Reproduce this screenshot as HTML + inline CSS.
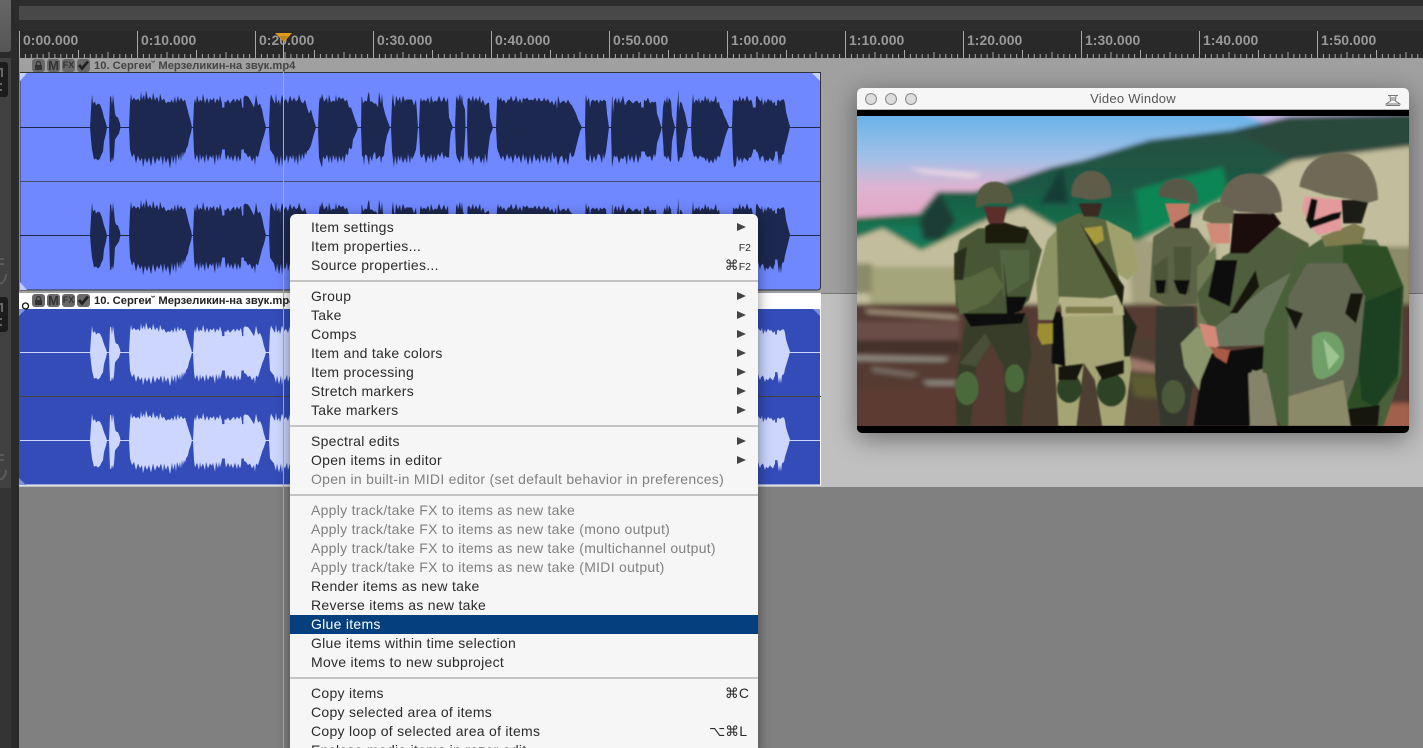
<!DOCTYPE html>
<html><head><meta charset="utf-8"><title>Reaper</title>
<style>
html,body{margin:0;padding:0;background:#808080}
#r{position:relative;width:1423px;height:748px;overflow:hidden;font-family:"Liberation Sans",sans-serif;background:#808080}
.a{position:absolute}
#menu{left:290px;top:214px;width:468px;height:540px;background:#f6f6f6;border-radius:6px 6px 0 0;box-shadow:0 3px 14px rgba(0,0,0,.45)}
.i{position:absolute;left:0;width:468px;height:19px;line-height:19px;font-size:14px;letter-spacing:.28px;color:#2b2b2b;padding-left:21px;box-sizing:border-box;white-space:nowrap}
.d{color:#808080}
.h{background:#053f7d;color:#fff}
.s{position:absolute;left:0;width:468px;height:2px;background:#c4c4c4}
.ar{position:absolute;left:447px;top:5px;width:0;height:0;border-left:9px solid #444;border-top:4.5px solid transparent;border-bottom:4.5px solid transparent}
.k{position:absolute;right:7px;top:0;letter-spacing:0;font-family:"Liberation Sans","DejaVu Sans",sans-serif}
.k small{font-size:10.5px}
.hd{position:absolute;height:13px;font:bold 11.2px/14px "Liberation Sans",sans-serif;white-space:nowrap}
.b{position:absolute;top:0;width:13px;height:13px;background:#696969;border-radius:3px;color:#333;text-align:center;font:bold 13px/13px "Liberation Sans",sans-serif}
#vw{left:857px;top:88px;width:552px;height:345px;background:#000;border-radius:5px;box-shadow:0 6px 26px rgba(0,0,0,.42);overflow:hidden}
#tb{position:absolute;left:0;top:0;width:552px;height:21px;background:#f6f6f6;border-bottom:1px solid #b5b5b5}
.c{position:absolute;top:5px;width:10px;height:10px;border-radius:50%;background:#dcdcdc;border:1px solid #8b8b8b}
</style></head><body><div id="r">

<div class="a" style="left:0;top:0;width:1423px;height:58px;background:#2d2d2d"></div>
<div class="a" style="left:19px;top:6px;width:1404px;height:14px;background:#484848"></div>
<div class="a" style="left:19px;top:31px;width:1404px;height:27px;background:#292929"></div>
<div class="a" style="left:19px;top:58px;width:1404px;height:235px;background:#a0a0a0"></div>
<div class="a" style="left:19px;top:293px;width:1404px;height:194px;background:#c0c0c0;border-top:1px solid #777;box-sizing:border-box"></div>
<div class="a" style="left:19px;top:487px;width:1404px;height:261px;background:#808080"></div>
<div class="a" style="left:0;top:0;width:19px;height:748px;background:#2b2b2b"></div>
<div class="a" style="left:0;top:0;width:11px;height:52px;background:linear-gradient(#666,#555);border-radius:0 0 3px 0"></div>
<div class="a" style="left:0;top:58px;width:11px;height:430px;background:#414141"></div>
<div class="a" style="left:0;top:488px;width:11px;height:260px;background:#343434"></div>
<div class="a" style="left:0;top:62px;width:8px;height:35px;background:#1c1c1c;border-radius:0 3px 3px 0"></div>
<div class="a" style="left:0;top:297px;width:8px;height:35px;background:#1c1c1c;border-radius:0 3px 3px 0"></div>
<svg class="a" style="left:0;top:58px" width="11" height="430" viewBox="0 58 11 430" fill="none" stroke="#5a5a5a" stroke-width="2">
<path d="M0 69H2V77" stroke="#666"/><path d="M0 84H2M0 90H2" stroke="#666"/><path d="M0 304H2V312" stroke="#666"/><path d="M0 319H2M0 325H2" stroke="#666"/>
<path d="M0 259H4M0 264H4M6 274C6 280 2 284 0 283"/><path d="M0 455H4M0 460H4M6 470C6 476 2 480 0 479"/>
</svg>

<svg class="a" style="left:0;top:0" width="1423" height="748" viewBox="0 0 1423 748">
<defs>
<pattern id="t" patternUnits="userSpaceOnUse" x="19" y="31" width="118" height="27">
<path stroke="#a8a8a8" stroke-width="1" fill="none" d="M.5 0V27M6.4 23V27M12.3 23V27M18.2 23V27M24.1 23V27M30 21V27M35.9 23V27M41.8 23V27M47.7 23V27M53.6 23V27M59.5 19V27M65.4 23V27M71.3 23V27M77.2 23V27M83.1 23V27M89 21V27M94.9 23V27M100.8 23V27M106.7 23V27M112.6 23V27"/>
</pattern>
<path id="w" d="M90,0 91,-18 92,-33 93,-24 95,-26 96,-22 98,-24 100,-23 102,-18 104,-10 106,-4 107,0 106,6 104,14 103,24 101,28 100,31 98,33 96,31 94,32 93,27 92,22 91,12Z
M109,0 110,-30 111,-32 112,-22 113,-33 114,-24 115,-14 116,-11 118,-10 120,-4 120.5,0 119,6 117,9 115,12 114,28 113,34 112,30 111,35 110,34Z
M129,0 130,-24 131,-34 132,-27 134,-30 136,-27 138,-29 140,-26 141,-36 142,-28 144,-33 145,-27 146,-37 148,-28 150,-31 152,-27 153,-35 155,-27 157,-31 159,-25 160,-34 162,-27 164,-29 166,-24 168,-26 170,-25 172,-28 173,-24 175,-31 176,-24 178,-32 179,-26 181,-30 183,-26 185,-28 187,-20 189,-12 191,-5 192,0 191,5 189,12 188,18 186,22 185,27 184,24 183,30 182,24 181,34 180,26 179,33 177,26 176,38 175,28 173,36 172,27 170,41 168,30 166,36 164,28 163,38 161,28 159,34 157,30 155,37 153,28 151,39 149,30 147,36 145,30 143,40 142,30 140,34 138,28 136,36 134,26 132,30 131,26 130,22Z
M193,0 194,-24 195,-29 196,-24 197,-32 199,-25 200,-28 202,-26 203,-34 205,-24 207,-30 209,-24 210,-29 212,-27 214,-30 215,-24 217,-29 219,-26 220,-32 222,-24 223,0 222,24 220,33 219,26 218,34 216,26 215,38 213,27 212,31 210,28 208,34 206,26 205,36 203,28 201,33 200,26 199,36 197,27 196,30 195,33 194,24Z
M224,0 224.5,-26 226,-25 228,-28 230,-24 232,-27 234,-29 235,-25 237,-29 239,-26 241,-30 242,-22 242.5,0 241,30 240,34 238,28 237,35 235,27 233,34 231,28 230,33 228,27 226,33 225,26Z
M243,0 243.5,-30 245,-32 248,-31 250,-28 252,-24 254,-20 255,-25 256,-33 258,-22 260,-24 262,-18 264,-8 266,0 264,8 262,14 260,22 258,30 256,28 255,38 254,30 252,34 250,28 248,30 246,26 244,25Z
M269,0 270,-26 271,-33 273,-28 275,-24 276,-34 277,-24 279,-28 280,-22 282,-33 284,-26 286,-29 288,-24 290,-32 292,-26 294,-30 296,-26 298,-28 299,-33 301,-26 303,-24 305,-28 307,-20 309,-14 311,-18 313,-10 315,-4 316,0 315,3 313,10 311,18 309,22 307,24 306,28 305,24 304,32 302,26 301,34 299,26 298,38 296,28 295,36 293,27 292,32 290,28 288,36 287,27 285,34 283,30 282,40 281,28 279,39 277,28 276,37 274,28 272,25 270,22Z
M318,0 319,-24 320,-31 321,-28 322,-34 324,-26 325,-27 327,-30 328,-24 329,-33 331,-25 333,-27 335,-26 336,-33 337,-26 339,-31 341,-28 343,-30 345,-26 347,-28 349,-20 351,-20 353,-14 355,-8 357,-3 358,0 357,3 355,8 353,12 352,20 351,22 349,20 348,28 346,26 344,36 343,28 341,34 339,28 338,36 336,28 335,33 333,27 332,36 330,28 329,36 327,27 325,32 323,29 322,40 320,34 319,30Z
M361,0 361.5,-30 362,-31 363,-24 365,-27 367,-26 368,-33 369,-36 370,-26 372,-26 374,-24 376,-24 378,-20 379,-36 381,-24 382,-34 383,-22 385,-14 387,-8 389,-3 390,0 389,3 387,8 385,18 384,28 382,30 381,36 380,28 378,30 376,32 375,24 373,28 372,34 370,28 369,38 367,28 365,27 364,38 363,28 362,30Z
M391,0 392,-26 393,-34 394,-24 395,-20 396,-32 398,-26 400,-31 401,-24 403,-32 405,-26 406,-28 408,-28 410,-28 412,-28 414,-22 416,-28 417,-14 418,0 417,12 416,22 414,28 412,32 411,28 410,36 408,26 407,36 405,30 403,36 401,28 400,34 398,28 397,38 395,28 394,40 393,32 392,24Z
M419,0 420,-26 421,-30 422,-26 424,-28 426,-26 428,-30 430,-24 431,-32 433,-25 435,-27 437,-26 439,-32 441,-26 442,-26 444,-31 446,-25 448,-30 449,-10 451,-5 453,0 451,4 450,12 449,30 447,30 445,28 444,32 442,24 440,30 438,26 436,34 434,28 433,36 431,26 430,32 428,28 426,36 424,26 422,30 421,30 420,26Z
M455,0 456,-28 457,-32 458,-26 460,-34 461,-26 462,-33 463,-24 465,-18 465.5,0 465,10 464,28 463,34 461,28 460,36 458,32 457,30 456,26Z
M467,0 467.5,-28 469,-30 471,-26 473,-32 474,-26 476,-30 478,-26 480,-32 481,-24 483,-28 485,-22 487,-24 489,-25 490,-10 492,-3 493,0 492,3 490,8 488,24 487,36 485,26 484,38 483,30 481,36 479,28 477,32 475,28 473,38 472,30 470,34 469,28 468,32Z
M496,0 497,-26 498,-32 499,-27 501,-30 502,-26 504,-28 506,-24 508,-28 510,-28 511,-32 513,-26 515,-28 516,-32 518,-25 520,-29 522,-24 523,-30 525,-28 527,-30 529,-27 531,-28 533,-27 535,-30 537,-26 539,-30 541,-26 543,-27 544,-30 546,-26 548,-29 550,-24 552,-27 554,-22 556,-28 557,-18 558,-32 560,-24 562,-26 564,-27 566,-24 568,-28 570,-24 572,-22 574,-18 576,-14 578,-8 580,-4 582,0 580,4 578,12 576,20 574,28 572,30 570,24 568,38 566,30 564,36 562,28 560,30 558,38 556,28 554,32 552,24 551,36 549,28 547,36 545,28 543,34 541,26 540,36 538,30 536,34 534,26 532,37 530,28 528,38 526,28 525,34 523,26 521,36 519,28 517,32 515,26 513,36 511,28 509,32 507,26 505,34 503,28 501,32 499,26 498,24 497,20Z
M585,0 585.5,-28 586,-33 587,-26 589,-30 590,-20 591,-26 593,-28 595,-26 597,-28 599,-24 600,-28 602,-26 604,-28 606,-26 607,-14 609,0 608,8 607,16 606,24 604,32 603,26 602,36 600,28 598,26 596,34 594,28 592,36 590,26 589,34 587,32 586,32Z
M611,0 612,-30 612.5,-31 613,-14 614,-26 616,-30 617,-24 619,-30 620,-24 622,-28 623,-32 625,-22 627,-26 629,-28 631,-26 633,-24 635,-26 637,-27 639,-24 641,-26 642,0 641,32 640,28 638,36 636,26 634,36 632,28 630,34 628,26 627,38 625,28 623,32 621,30 619,36 617,28 616,30 614,28 612,40Z
M643,0 644,-28 646,-26 648,-30 650,-24 652,-26 654,-25 656,-26 657,-14 659,-8 661,-1 661.5,0 661,3 659,10 657,16 656,26 655,30 654,26 652,34 650,28 648,30 646,28 645,26Z
M662,0 663,-20 664,-26 665,-28 666,-24 667,-32 668,-24 669,-30 671,-26 672,-12 674,-4 675,0 674,4 672,14 671,34 670,34 668,28 667,32 665,28 664,30 663,12Z
M676,0 677,-20 678,-30 678.5,-38 679,-16 680,-26 682,-24 683,-20 685,-14 687,-4 688,0 687,4 685,14 684,22 683,26 682,30 680,30 679,34 678,34 677,22Z
M691,0 692,-22 693,-34 694,-24 695,-26 696,-28 698,-26 699,-30 700,-24 702,-28 704,-26 705,-32 707,-26 708,-30 710,-24 711,-28 712,-26 714,-26 716,-32 717,-24 719,-26 720,-20 722,-18 724,-12 726,-8 729,-1 727,4 725,10 723,18 721,24 720,30 718,28 716,34 715,30 713,36 711,32 709,36 707,30 706,34 704,30 702,30 700,28 698,32 696,28 694,30 692,22Z
M732,0 733,-28 735,-26 736,-28 738,-26 740,-32 741,-26 743,-30 745,-26 747,-32 749,-26 751,-28 752,-26 753,-20 754,0 753,24 751,30 749,30 748,34 746,32 744,30 742,36 741,30 739,34 737,28 736,38 734,40 733,30Z
M755,0 756,-30 757,-32 759,-28 761,-26 762,-30 763,-22 765,-28 766,-24 768,-29 770,-26 771,-28 773,-24 775,-26 776,0 775,28 773,34 771,32 770,30 768,34 766,32 765,36 763,28 761,30 760,34 758,26 757,24 756,24Z
M776,0 777,-26 778,-28 780,-26 782,-28 784,-28 785,-24 786,-16 788,-8 790,-1 789,4 787,12 785,20 784,26 782,28 781,38 780,30 779,38 778,30 777,20Z
M221,-20 226,-20 226,22 221,22Z M240,-20 245,-20 245,22 240,22Z M640,-20 645,-20 645,24 640,24Z M752,-20 757,-20 757,22 752,22Z M773,-22 778,-22 778,24 773,24Z"/>
</defs>
<rect x="19" y="31" width="1404" height="27" fill="url(#t)"/>
<g font-family="Liberation Sans" font-size="14" font-weight="bold" fill="#999">
<text x="23" y="45">0:00.000</text><text x="141" y="45">0:10.000</text><text x="259" y="45">0:20.000</text><text x="377" y="45">0:30.000</text><text x="495" y="45">0:40.000</text><text x="613" y="45">0:50.000</text><text x="731" y="45">1:00.000</text><text x="849" y="45">1:10.000</text><text x="967" y="45">1:20.000</text><text x="1085" y="45">1:30.000</text><text x="1203" y="45">1:40.000</text><text x="1321" y="45">1:50.000</text>
</g>

<!-- item 1 -->
<path d="M20 72.5H820.5V287a3 3 0 0 1-3 3H20Z" fill="#7088ff" stroke="#333" stroke-width="1"/>
<rect x="19" y="72" width="1" height="218" fill="#7088ff"/>
<path d="M20 81V73H27Z" fill="#c8d2ff"/><path d="M20 282V290H27Z" fill="#c0ccff"/><path d="M812 73H820V81Z" fill="#c8d2ff"/>
<rect x="20" y="181" width="800" height="1" fill="#454a66"/>
<rect x="20" y="127" width="800" height="1" fill="#1d2850"/><rect x="20" y="235" width="800" height="1" fill="#1d2850"/>
<use href="#w" transform="translate(0,127.5)" fill="#1d2850"/>
<use href="#w" transform="translate(0,235.5)" fill="#1d2850"/>

<!-- item 2 -->
<rect x="19" y="293" width="802" height="16" fill="#fff"/>
<path d="M19 309H820.5V484.5H19Z" fill="#334cb8"/>
<path d="M820.5 294V485H19" fill="none" stroke="#fff" stroke-width="1"/>
<path d="M19 316V309H26Z" fill="#7e93dd"/><path d="M19 478V485H26Z" fill="#7e93dd"/><path d="M813 309H820V316Z" fill="#7e93dd"/>
<rect x="19" y="396" width="802" height="1" fill="#444"/>
<rect x="20" y="352" width="800" height="1" fill="#ccd6ff"/><rect x="20" y="440" width="800" height="1" fill="#ccd6ff"/>
<use href="#w" transform="translate(0,352.5) scale(1,.82)" fill="#ccd6ff"/>
<use href="#w" transform="translate(0,440.5) scale(1,.82)" fill="#ccd6ff"/>
<circle cx="25.5" cy="306" r="3" fill="#fff" stroke="#111" stroke-width="1.3"/>

<!-- playhead -->
<rect x="283" y="33" width="1" height="715" fill="#e6a640"/>
<path d="M275 33H292L284 42Z" fill="#e39a1c"/><path d="M279 36H288L283.5 41Z" fill="#b98320"/>
</svg>

<div class="hd" style="left:32px;top:59px;color:#444;width:270px"><span class="b" style="left:0"><svg width="13" height="13" viewBox="0 0 13 13"><path d="M3 6h7v5H3Z" fill="#333"/><path d="M4.5 6V4.5a2 2 0 0 1 4 0V6" fill="none" stroke="#333" stroke-width="1.3"/></svg></span><span class="b" style="left:15px">M</span><span class="b" style="left:30px;font-size:9px">FX</span><span class="b" style="left:45px"><svg width="13" height="13" viewBox="0 0 13 13"><path d="M2 6l3 3.5 6-7" fill="none" stroke="#222" stroke-width="2.8"/></svg></span><span style="position:absolute;left:62px;top:0">10. Сергеи˘ Мерзеликин-на звук.mp4</span></div>
<div class="hd" style="left:32px;top:294px;color:#222;width:258px;overflow:hidden;height:14px"><span class="b" style="left:0"><svg width="13" height="13" viewBox="0 0 13 13"><path d="M3 6h7v5H3Z" fill="#333"/><path d="M4.5 6V4.5a2 2 0 0 1 4 0V6" fill="none" stroke="#333" stroke-width="1.3"/></svg></span><span class="b" style="left:15px">M</span><span class="b" style="left:30px;font-size:9px">FX</span><span class="b" style="left:45px"><svg width="13" height="13" viewBox="0 0 13 13"><path d="M2 6l3 3.5 6-7" fill="none" stroke="#222" stroke-width="2.8"/></svg></span><span style="position:absolute;left:62px;top:0">10. Сергеи˘ Мерзеликин-на звук.mp4</span></div>

<!-- video window -->
<div class="a" id="vw">
<svg style="position:absolute;left:0;top:28px" width="552" height="310" viewBox="19 108 1511 930" preserveAspectRatio="none">
<defs>
<linearGradient id="sky" x1="0" y1="0" x2="0" y2="1"><stop offset="0" stop-color="#62b2ea"/><stop offset=".4" stop-color="#a4c0e6"/><stop offset=".62" stop-color="#dcb4d2"/><stop offset="1" stop-color="#e8a0c0"/></linearGradient>
<linearGradient id="fo" x1="0" y1="0" x2="0" y2="1"><stop offset="0" stop-color="#2a4c40"/><stop offset=".5" stop-color="#1c5844"/><stop offset="1" stop-color="#0c8052"/></linearGradient>
<filter id="b1" x="-10%" y="-10%" width="120%" height="120%"><feGaussianBlur stdDeviation="7"/></filter>
<filter id="b2" x="-10%" y="-10%" width="120%" height="120%"><feGaussianBlur stdDeviation="2"/></filter>
<clipPath id="vc"><rect x="19" y="108" width="1511" height="930"/></clipPath>
</defs>
<g clip-path="url(#vc)">
<g filter="url(#b1)">
<rect x="0" y="90" width="1540" height="370" fill="url(#sky)"/>
<path d="M1050 90H1540V170L1200 160Z" fill="#c4b8e6"/>
<path d="M160 262L360 280 340 296 200 280Z" fill="#e6d4e4"/>
<path d="M0 415L190 400 240 335 340 335 450 300 550 262 640 240 820 180 1050 150 1200 110 1540 100V300L1200 280 800 520 200 530 0 470Z" fill="url(#fo)"/>
<path d="M0 430L100 440 200 440 300 400 200 500Z" fill="#12785a"/>
<path d="M190 420L245 340 290 420 250 480 200 480Z" fill="#1c3c34"/>
<path d="M520 370L580 260 600 370Z" fill="#173c34"/>
<path d="M1050 150L1200 115 1540 105V210L1210 240Z" fill="#2c4a3e"/>
<path d="M780 330L1020 260 1040 370 800 470Z" fill="#0e8656"/>
<path d="M0 480L90 445 195 512 350 430 470 380 570 445 650 460 790 482 1000 370 1210 242 1540 198V700H0Z" fill="#c2bd9c"/>
<path d="M40 560H310V695H60Z" fill="#a5a57b"/>
<path d="M0 550H60V640H0Z" fill="#8a8b69"/>
<path d="M760 480H1000V820H780Z" fill="#a39f7c"/>
<path d="M1440 500H1540V740H1480Z" fill="#8c8a68"/>
<rect x="0" y="672" width="1540" height="390" fill="#543a32"/>
<path d="M40 688L290 705 300 718 50 700Z" fill="#a8947f"/>
<rect x="0" y="725" width="300" height="55" fill="#6b4e46"/>
<rect x="0" y="780" width="300" height="40" fill="#45302b"/>
<path d="M0 825L270 832 260 845 0 842Z" fill="#8f8a80"/>
<path d="M60 860L190 880 170 892 60 876Z" fill="#776c62"/>
<path d="M200 902H290V916H210Z" fill="#8f8a80"/>
<rect x="0" y="925" width="300" height="130" fill="#5c3a32"/>
<path d="M480 780H860V1040H480Z" fill="#4e4030"/>
<path d="M760 880L930 900 930 960 780 950Z" fill="#5c5c32"/>
<path d="M750 830L830 850 860 880 750 870Z" fill="#9c7868"/>
<path d="M1450 970H1540V1050H1450Z" fill="#a0604c"/>
</g>
<g filter="url(#b2)">
<!-- soldier 1 -->
<path d="M292 1038L288 930 298 850 320 710H485L497 820 475 960 470 1038H428L420 860 385 790 345 860 330 1038Z" fill="#383c2a"/>
<path d="M300 850L370 760 385 790 345 860Z" fill="#4a4f38"/>
<ellipse cx="320" cy="925" rx="32" ry="50" fill="#4c6a3a"/><ellipse cx="450" cy="895" rx="26" ry="42" fill="#4c6a3a"/>
<path d="M285 560L300 480 350 445 480 440 525 510 490 660 440 715 320 705 290 680Z" fill="#475634"/>
<path d="M410 510H490V600L420 650Z" fill="#516540"/>
<path d="M285 600L330 590 390 560 420 620 380 670 300 705Z" fill="#59693f"/>
<path d="M420 540L430 710 470 690 485 650H430Z" fill="#0f0f08"/>
<path d="M310 700H480L470 730 330 740Z" fill="#0e0e08"/>
<path d="M370 440L400 420 490 450 480 490H370Z" fill="#1c1a10"/>
<path d="M285 520L320 500 310 600 285 600Z" fill="#2a2e1c"/>
<path d="M365 380H430L420 430H380Z" fill="#5c2f2c"/>
<path d="M345 385C340 340 360 305 395 305S450 340 446 370L430 372 380 370Z" fill="#565a40"/>
<!-- soldier 2 -->
<path d="M570 1038L560 830 580 700H750L770 860 750 1038H690L670 900 640 850 620 1038Z" fill="#a4a474"/>
<path d="M555 690L552 850 590 860 582 700Z" fill="#0e0e08"/>
<path d="M745 670L785 740 765 830 750 830Z" fill="#1e2414"/>
<ellipse cx="600" cy="925" rx="34" ry="44" fill="#2e4227"/><ellipse cx="715" cy="930" rx="40" ry="50" fill="#2e4227"/>
<path d="M570 860L640 850 620 900 570 900ZM670 860L750 840 750 880 690 900Z" fill="#141410"/>
<path d="M575 650H745L750 705 580 710Z" fill="#b5b186"/>
<rect x="590" y="680" width="130" height="20" fill="#7c7a4a"/>
<path d="M510 600L540 480 590 420 575 650 555 720 515 720Z" fill="#8d9363"/>
<path d="M700 420L770 460 790 570 760 600 700 560Z" fill="#a0a06c"/>
<path d="M565 430L625 400 700 420 745 640 690 655 570 650Z" fill="#5a6640"/>
<path d="M515 730L555 730 555 790 525 795 512 765Z" fill="#9a9030"/>
<path d="M640 445L690 438 695 480 670 495Z" fill="#a69a3c"/>
<path d="M630 430L750 620 745 680 720 620Z" fill="#1c1c10"/>
<path d="M625 370H690L680 410H640Z" fill="#3a2a20"/>
<path d="M607 350C600 300 630 272 660 272S720 300 714 352L660 360Z" fill="#5f5c48"/>
<!-- soldier 3 -->
<path d="M838 680L835 900 850 1038H920L950 850 940 680Z" fill="#36372f"/>
<ellipse cx="885" cy="950" rx="32" ry="50" fill="#4c5a38"/>
<path d="M820 650L830 470 880 435 950 445 985 500 960 670 870 680Z" fill="#5c6245"/>
<path d="M830 560L870 530 870 640 835 640ZM885 500H935L930 640 890 630Z" fill="#4e5538"/>
<path d="M835 600H865L860 640 840 640ZM885 600H930L920 645 900 640Z" fill="#0c0c08"/>
<path d="M862 370H930L920 440H880Z" fill="#c27a66"/><path d="M885 430L935 400 930 445H890Z" fill="#1a1712"/>
<path d="M846 350C840 315 870 295 900 295S955 320 952 375L900 360Z" fill="#59584a"/>
<!-- soldier 4 -->
<path d="M950 560L1000 500 1010 700 980 760 950 740Z" fill="#6d7a52"/>
<path d="M905 790L950 740 1005 780 1000 860 960 940 915 860Z" fill="#8b966c"/>
<path d="M975 430H1040L1040 490 990 490Z" fill="#cf8a78"/>
<path d="M965 420C965 385 990 365 1020 365L1050 380V430H990Z" fill="#6b6c50"/>
<!-- soldier 5 -->
<path d="M940 1038L960 900 990 820 1130 800 1160 900 1140 1038Z" fill="#11110b"/>
<path d="M1090 880L1150 860 1160 1038H1095Z" fill="#85846a"/>
<path d="M950 640L1020 530 1170 440 1255 490 1260 560 1170 780 1000 770 960 700Z" fill="#4f5f3c"/>
<path d="M1000 740L1140 620 1245 555 1150 795 1010 800Z" fill="#6a765b"/>
<path d="M1000 540L1060 540 1040 680 980 650Z" fill="#10100a"/>
<path d="M1040 700L1110 570 1120 620 1060 700Z" fill="#141410"/>
<path d="M955 730L1000 740 1010 800 975 800Z" fill="#d48878"/>
<path d="M985 800L1040 810 1030 850 1000 830Z" fill="#a85a44"/>
<path d="M1050 400H1160L1180 430 1090 520 1040 520Z" fill="#1a110c"/>
<path d="M1012 372C1020 300 1060 280 1100 280S1185 310 1182 395L1150 402 1060 395Z" fill="#6a6452"/>
<!-- soldier 6 -->
<path d="M1135 750L1230 520 1300 470 1440 480 1515 620 1510 880 1460 1038H1180L1125 960Z" fill="#48603a"/>
<path d="M1350 490L1470 500 1515 620 1500 900 1440 980 1340 990Z" fill="#2d4f28"/>
<path d="M1380 680L1510 620 1500 880 1440 980 1400 960Z" fill="#1f4024"/>
<path d="M1200 650L1250 550 1360 550 1410 650 1390 880 1350 1000 1200 1038Z" fill="#636753"/>
<path d="M1190 680L1240 700 1220 750ZM1370 640L1405 640 1385 730 1355 700ZM1340 990L1450 975 1445 1038H1350Z" fill="#12120c"/>
<path d="M1200 950L1350 900 1370 1038H1200Z" fill="#8a8a68"/>
<path d="M1265 770C1290 745 1340 750 1350 800S1340 880 1300 895 1265 850 1265 770Z" fill="#6fa068"/>
<path d="M1295 775L1340 830 1310 870Z" fill="#9cc490"/>
<path d="M1100 870L1140 880 1170 1038H1095Z" fill="#85846a"/>
<path d="M1290 470L1380 430 1410 445 1400 490 1300 500Z" fill="#7e7c50"/>
<path d="M1245 350L1345 360 1345 450 1280 465 1250 420 1238 385Z" fill="#e49a9c"/>
<path d="M1262 355L1280 360 1270 420 1320 400 1345 395 1340 415 1260 445 1248 420Z" fill="#111"/>
<path d="M1345 360H1420L1400 430H1350Z" fill="#1d1b16"/>
<path d="M1230 320C1240 250 1285 218 1340 218S1445 260 1445 360L1420 368 1300 345Z" fill="#6e6a55"/>
</g>
</g>
</svg>
<div id="tb">
<div class="c" style="left:8px"></div><div class="c" style="left:28px"></div><div class="c" style="left:48px"></div>
<div style="position:absolute;left:0;top:0;width:552px;text-align:center;font-size:13px;line-height:22px;color:#555;letter-spacing:.25px">Video Window</div>
<svg style="position:absolute;left:528px;top:6px" width="16" height="12" viewBox="0 0 16 12"><path d="M3 1.5H13M5 1.5L5.5 7 1 10H15L10.5 7 11 1.5M7 3V7M9 3V7M1 11.5H15" fill="none" stroke="#777" stroke-width="1"/></svg>
</div>
</div>

<!-- menu -->
<div class="a" id="menu">
<div class="i" style="top:4px">Item settings<span class="ar"></span></div>
<div class="i" style="top:23px">Item properties...<span class="k"><small>F2</small></span></div>
<div class="i" style="top:42px">Source properties...<span class="k">⌘<small>F2</small></span></div>
<div class="s" style="top:66px"></div>
<div class="i" style="top:73px">Group<span class="ar"></span></div>
<div class="i" style="top:92px">Take<span class="ar"></span></div>
<div class="i" style="top:111px">Comps<span class="ar"></span></div>
<div class="i" style="top:130px">Item and take colors<span class="ar"></span></div>
<div class="i" style="top:149px">Item processing<span class="ar"></span></div>
<div class="i" style="top:168px">Stretch markers<span class="ar"></span></div>
<div class="i" style="top:187px">Take markers<span class="ar"></span></div>
<div class="s" style="top:211px"></div>
<div class="i" style="top:218px">Spectral edits<span class="ar"></span></div>
<div class="i" style="top:237px">Open items in editor<span class="ar"></span></div>
<div class="i d" style="top:256px">Open in built-in MIDI editor (set default behavior in preferences)</div>
<div class="s" style="top:280px"></div>
<div class="i d" style="top:287px">Apply track/take FX to items as new take</div>
<div class="i d" style="top:306px">Apply track/take FX to items as new take (mono output)</div>
<div class="i d" style="top:325px">Apply track/take FX to items as new take (multichannel output)</div>
<div class="i d" style="top:344px">Apply track/take FX to items as new take (MIDI output)</div>
<div class="i" style="top:363px">Render items as new take</div>
<div class="i" style="top:382px">Reverse items as new take</div>
<div class="i h" style="top:401px">Glue items</div>
<div class="i" style="top:420px">Glue items within time selection</div>
<div class="i" style="top:439px">Move items to new subproject</div>
<div class="s" style="top:463px"></div>
<div class="i" style="top:470px">Copy items<span class="k" style="right:9px">⌘C</span></div>
<div class="i" style="top:489px">Copy selected area of items</div>
<div class="i" style="top:508px">Copy loop of selected area of items<span class="k" style="right:11px">⌥⌘L</span></div>
<div class="i" style="top:527px">Enclose media items in razor edit</div>
</div>

</div></body></html>
